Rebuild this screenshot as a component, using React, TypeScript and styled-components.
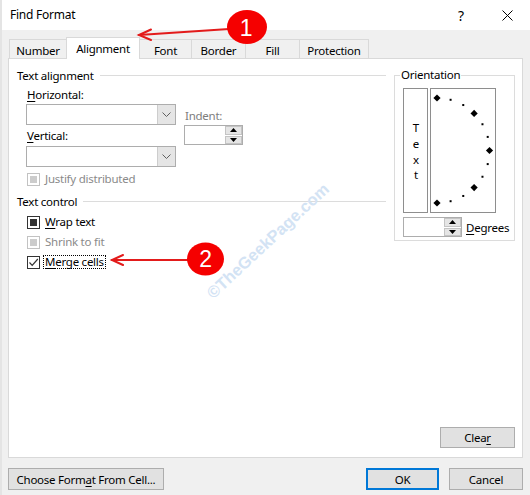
import React from "react";
import styled, { createGlobalStyle, css } from "styled-components";

const GlobalStyle = createGlobalStyle`
  html, body { margin: 0; padding: 0; background: #f0f0f0; }
  body {
    font-family: "Noto Sans", "Open Sans", sans-serif;
    font-size: 11.5px;
    letter-spacing: -0.25px;
    color: #000;
  }
  * { box-sizing: border-box; }
  u { text-decoration-thickness: 1px; text-underline-offset: 2px; }
`;

const Page = styled.div`
  position: relative;
  width: 530px;
  height: 495px;
  overflow: hidden;
`;

const Window = styled.div`
  width: 530px;
  height: 495px;
  background: #f0f0f0;
  border-left: 2px solid;
  border-image: linear-gradient(to right, #e4e4e4 50%, #8a8a8a 50%) 1;
  display: flex;
  flex-direction: column;
`;

const TitleBar = styled.div`
  height: 30px;
  flex: none;
  background: #fff;
  display: flex;
  align-items: center;
  padding-left: 8px;
`;

const Title = styled.div`
  flex: 1;
  line-height: 16px;
  font-size: 12px;
`;

const CaptionButton = styled.div`
  width: 46px;
  height: 30px;
  display: flex;
  align-items: center;
  justify-content: center;
  font-size: 14px;
`;

const Body = styled.div`
  flex: 1;
  display: flex;
  flex-direction: column;
  padding: 7px 7px 0 6px;
`;

const TabStrip = styled.div`
  display: flex;
  align-items: flex-end;
  height: 22px;
  padding-left: 1px;
`;

const Tab = styled.div<{ $active?: boolean; $w: number }>`
  width: ${(p) => p.$w}px;
  height: ${(p) => (p.$active ? 22 : 20)}px;
  margin-left: -1px;
  &:first-child { margin-left: 0; }
  border: 1px solid #d9d9d9;
  border-bottom: none;
  background: ${(p) => (p.$active ? "#fff" : "#f0f0f0")};
  display: flex;
  align-items: center;
  justify-content: center;
  padding-top: ${(p) => (p.$active ? 0 : 2)}px;
  ${(p) =>
    p.$active &&
    css`
      position: relative;
      z-index: 2;
    `}
`;

const Panel = styled.div`
  position: relative;
  z-index: 1;
  margin-top: -1px;
  height: 400px;
  background: #fff;
  border: 1px solid #d9d9d9;
  display: flex;
  flex-direction: column;
  padding: 8px 7px 9px 8px;
`;

const MainRow = styled.div`
  display: flex;
  align-items: flex-start;
`;

const LeftCol = styled.div`
  width: 369px;
  display: flex;
  flex-direction: column;
`;

const SectionHeader = styled.div<{ $mt?: number }>`
  display: flex;
  align-items: center;
  gap: 6px;
  height: 16px;
  margin-top: ${(p) => p.$mt ?? 0}px;
`;

const HeaderLine = styled.div`
  flex: 1;
  height: 1px;
  background: #dcdcdc;
`;

const Indented = styled.div`
  padding-left: 9px;
  display: flex;
  flex-direction: column;
`;

const FieldRow = styled.div`
  display: flex;
  align-items: flex-start;
`;

const FieldCol = styled.div<{ $mt?: number; $ml?: number }>`
  display: flex;
  flex-direction: column;
  margin-top: ${(p) => p.$mt ?? 0}px;
  margin-left: ${(p) => p.$ml ?? 0}px;
`;

const FieldLabel = styled.div<{ $mt?: number; $disabled?: boolean }>`
  height: 16px;
  line-height: 16px;
  margin-top: ${(p) => p.$mt ?? 0}px;
  padding-left: 1px;
  color: ${(p) => (p.$disabled ? "#7d7d7d" : "#000")};
`;

const Combo = styled.div<{ $mt?: number }>`
  width: 150px;
  height: 21px;
  margin-top: ${(p) => p.$mt ?? 0}px;
  border: 1px solid #adadad;
  background: #fff;
  display: flex;
  justify-content: flex-end;
`;

const DropButton = styled.div`
  width: 18px;
  height: 100%;
  background: #e5e5e5;
  border-left: 1px solid #cdcdcd;
  display: flex;
  align-items: center;
  justify-content: center;
`;

const Spinner = styled.div<{ $w: number; $mt?: number }>`
  width: ${(p) => p.$w}px;
  height: 20px;
  margin-top: ${(p) => p.$mt ?? 0}px;
  border: 1px solid #adadad;
  background: #fff;
  display: flex;
  justify-content: flex-end;
`;

const SpinButtons = styled.div`
  width: 17px;
  display: flex;
  flex-direction: column;
  gap: 1px;
`;

const SpinButton = styled.div`
  flex: 1;
  background: #e5e5e5;
  border: 1px solid #c4c4c4;
  display: flex;
  align-items: center;
  justify-content: center;
`;

const CheckRow = styled.div<{ $mt?: number; $disabled?: boolean }>`
  display: flex;
  align-items: center;
  gap: 1px;
  height: 14px;
  margin-left: 1px;
  margin-top: ${(p) => p.$mt ?? 0}px;
  color: ${(p) => (p.$disabled ? "#8a8a8a" : "#000")};
`;

const CheckList = styled.div`
  display: flex;
  flex-direction: column;
  gap: 6px;
  margin-top: 6px;
`;

type BoxKind = "mixed" | "disabledMixed" | "checked";

const CheckBox = styled.span<{ $kind: BoxKind }>`
  width: 13px;
  height: 13px;
  flex: none;
  border: 1px solid ${(p) => (p.$kind === "disabledMixed" ? "#c2c2c2" : "#333")};
  background: #fff;
  display: flex;
  align-items: center;
  justify-content: center;
  margin-right: 2px;
`;

const MixedMark = styled.span<{ $disabled?: boolean }>`
  width: 7px;
  height: 7px;
  background: ${(p) => (p.$disabled ? "#cccccc" : "#333")};
`;

const CheckText = styled.span<{ $focus?: boolean }>`
  border: 1px ${(p) => (p.$focus ? "dotted #000" : "solid transparent")};
  padding: 0 1px;
  line-height: 12px;
`;

const OrientationGroup = styled.fieldset`
  margin: 0 0 0 8px;
  width: 121px;
  height: 174px;
  border: 1px solid #dcdcdc;
  padding: 0 0 0 8px;
  display: flex;
  flex-direction: column;
`;

const Legend = styled.legend`
  padding: 0 1px;
  margin-left: -3px;
  line-height: 16px;
  font-size: 11.5px;
`;

const DialRow = styled.div`
  display: flex;
  gap: 2px;
  margin-top: 5px;
`;

const TextBox = styled.div`
  width: 25px;
  height: 125px;
  border: 1px solid #8e8e8e;
  display: flex;
  align-items: center;
  justify-content: center;
`;

const VerticalText = styled.span`
  writing-mode: vertical-lr;
  text-orientation: upright;
  letter-spacing: 0.8px;
  font-size: 11.5px;
  line-height: 12px;
  margin-top: 2px;
`;

const DialBox = styled.div`
  width: 66px;
  height: 125px;
  border: 1px solid #8e8e8e;
  display: flex;
`;

const DegreesRow = styled.div`
  display: flex;
  align-items: center;
  gap: 4px;
  margin-top: 4px;
`;

const Button = styled.button<{ $w: number; $h?: number; $default?: boolean }>`
  width: ${(p) => p.$w}px;
  height: ${(p) => p.$h ?? 22}px;
  padding: 0;
  font: inherit;
  letter-spacing: inherit;
  color: #000;
  background: #e1e1e1;
  border: 1px solid #adadad;
  display: flex;
  align-items: center;
  justify-content: center;
  ${(p) =>
    p.$default &&
    css`
      border: 2px solid #0078d7;
    `}
`;

const ClearButton = styled(Button)`
  margin-top: auto;
  align-self: flex-end;
`;

const Footer = styled.div`
  display: flex;
  align-items: center;
  margin-top: 10px;
`;

const FooterRight = styled.div`
  margin-left: auto;
  display: flex;
  gap: 10px;
`;

const Watermark = styled.div`
  position: absolute;
  left: 268px;
  top: 241px;
  transform: translate(-50%, -50%) rotate(-43deg);
  font-family: "Liberation Sans", Arial, sans-serif;
  font-weight: bold;
  font-size: 16.5px;
  letter-spacing: 0;
  color: #d3e3f4;
  white-space: nowrap;
  pointer-events: none;
  z-index: 5;
`;

const Overlay = styled.svg`
  position: absolute;
  left: 0;
  top: 0;
  z-index: 6;
  pointer-events: none;
`;

const Chevron = () => (
  <svg width="9" height="5" viewBox="0 0 9 5">
    <path d="M0.5 0.5 L4.5 4.5 L8.5 0.5" fill="none" stroke="#606060" strokeWidth="1" />
  </svg>
);

const UpTri = () => (
  <svg width="7" height="4" viewBox="0 0 7 4">
    <path d="M0 4 L3.5 0 L7 4 Z" fill="#000" />
  </svg>
);
const DownTri = () => (
  <svg width="7" height="4" viewBox="0 0 7 4">
    <path d="M0 0 L3.5 4 L7 0 Z" fill="#000" />
  </svg>
);

const SpinControl: React.FC<{ w: number; mt?: number }> = ({ w, mt }) => (
  <Spinner $w={w} $mt={mt}>
    <SpinButtons>
      <SpinButton>
        <UpTri />
      </SpinButton>
      <SpinButton>
        <DownTri />
      </SpinButton>
    </SpinButtons>
  </Spinner>
);

const ComboBox: React.FC<{ mt?: number }> = ({ mt }) => (
  <Combo $mt={mt}>
    <DropButton>
      <Chevron />
    </DropButton>
  </Combo>
);

const CheckMark = () => (
  <svg width="11" height="11" viewBox="0 0 11 11">
    <path d="M1.5 5.5 L4.2 8.3 L9.8 2" fill="none" stroke="#333" strokeWidth="1.2" />
  </svg>
);

const Dial = () => {
  const cx = 6;
  const cy = 61.5;
  const r = 52.5;
  const items: React.ReactNode[] = [];
  for (let a = 90; a >= -90; a -= 15) {
    const rad = (a * Math.PI) / 180;
    const x = cx + r * Math.cos(rad);
    const y = cy - r * Math.sin(rad);
    if (a % 45 === 0) {
      items.push(
        <path
          key={a}
          d={`M${x} ${y - 3.6} L${x + 3.6} ${y} L${x} ${y + 3.6} L${x - 3.6} ${y} Z`}
          fill="#000"
        />
      );
    } else {
      items.push(<rect key={a} x={x - 1} y={y - 1} width="2" height="2" fill="#000" />);
    }
  }
  return (
    <svg width="64" height="123" viewBox="0 0 64 123">
      {items}
    </svg>
  );
};

const tabs: { label: string; w: number; active?: boolean }[] = [
  { label: "Number", w: 58 },
  { label: "Alignment", w: 74, active: true },
  { label: "Font", w: 53 },
  { label: "Border", w: 55 },
  { label: "Fill", w: 55 },
  { label: "Protection", w: 70 },
];

export default function App() {
  return (
    <>
      <GlobalStyle />
      <Page>
        <Window>
          <TitleBar>
            <Title>Find Format</Title>
            <CaptionButton>?</CaptionButton>
            <CaptionButton>
              <svg width="11" height="11" viewBox="0 0 11 11">
                <path d="M0.5 0.5 L10.5 10.5 M10.5 0.5 L0.5 10.5" stroke="#000" strokeWidth="1" />
              </svg>
            </CaptionButton>
          </TitleBar>
          <Body>
            <TabStrip>
              {tabs.map((t) => (
                <Tab key={t.label} $w={t.w} $active={t.active}>
                  {t.label}
                </Tab>
              ))}
            </TabStrip>
            <Panel>
              <MainRow>
                <LeftCol>
                  <SectionHeader>
                    Text alignment
                    <HeaderLine />
                  </SectionHeader>
                  <Indented>
                    <FieldRow>
                      <FieldCol>
                        <FieldLabel $mt={4}>
                          <u>H</u>orizontal:
                        </FieldLabel>
                        <ComboBox mt={1} />
                        <FieldLabel $mt={3}>
                          <u>V</u>ertical:
                        </FieldLabel>
                        <ComboBox mt={2} />
                      </FieldCol>
                      <FieldCol $mt={25} $ml={8}>
                        <FieldLabel $disabled>Indent:</FieldLabel>
                        <SpinControl w={59} mt={1} />
                      </FieldCol>
                    </FieldRow>
                    <CheckRow $mt={5} $disabled>
                      <CheckBox $kind="disabledMixed">
                        <MixedMark $disabled />
                      </CheckBox>
                      <CheckText>Justify distributed</CheckText>
                    </CheckRow>
                  </Indented>
                  <SectionHeader $mt={7}>
                    Text control
                    <HeaderLine />
                  </SectionHeader>
                  <Indented>
                    <CheckList>
                      <CheckRow>
                        <CheckBox $kind="mixed">
                          <MixedMark />
                        </CheckBox>
                        <CheckText>
                          <u>W</u>rap text
                        </CheckText>
                      </CheckRow>
                      <CheckRow $disabled>
                        <CheckBox $kind="disabledMixed">
                          <MixedMark $disabled />
                        </CheckBox>
                        <CheckText>Shrink to fit</CheckText>
                      </CheckRow>
                      <CheckRow>
                        <CheckBox $kind="checked">
                          <CheckMark />
                        </CheckBox>
                        <CheckText $focus>
                          <u>M</u>erge cells
                        </CheckText>
                      </CheckRow>
                    </CheckList>
                  </Indented>
                </LeftCol>
                <OrientationGroup>
                  <Legend>Orientation</Legend>
                  <DialRow>
                    <TextBox>
                      <VerticalText>Text</VerticalText>
                    </TextBox>
                    <DialBox>
                      <Dial />
                    </DialBox>
                  </DialRow>
                  <DegreesRow>
                    <SpinControl w={59} />
                    <span>
                      <u>D</u>egrees
                    </span>
                  </DegreesRow>
                </OrientationGroup>
              </MainRow>
              <ClearButton $w={75} $h={21}>
                Clea<u>r</u>
              </ClearButton>
            </Panel>
            <Footer>
              <Button $w={156}>
                Choose Form<u>a</u>t From Cell...
              </Button>
              <FooterRight>
                <Button $w={73} $default>
                  OK
                </Button>
                <Button $w={74}>Cancel</Button>
              </FooterRight>
            </Footer>
          </Body>
        </Window>
        <Watermark>©TheGeekPage.com</Watermark>
        <Overlay width="530" height="495" viewBox="0 0 530 495">
          <g stroke="#e31b1b" strokeWidth="2" fill="none" strokeLinecap="round">
            <path d="M229 29 L139 35" />
            <path d="M151 29.5 L139 35 L151 40" />
            <path d="M188 260 L112 260" />
            <path d="M123 255 L112 260 L123 265" />
          </g>
          <ellipse cx="247" cy="27" rx="20" ry="17" fill="#f50000" />
          <text
            x="246"
            y="35.5"
            fill="#fff"
            fontSize="23"
            fontFamily="Liberation Sans, Arial, sans-serif"
            textAnchor="middle"
          >
            1
          </text>
          <ellipse cx="205.5" cy="259" rx="18.5" ry="16.5" fill="#f50000" />
          <text
            x="205.5"
            y="267"
            fill="#fff"
            fontSize="23"
            fontFamily="Liberation Sans, Arial, sans-serif"
            textAnchor="middle"
          >
            2
          </text>
        </Overlay>
      </Page>
    </>
  );
}
